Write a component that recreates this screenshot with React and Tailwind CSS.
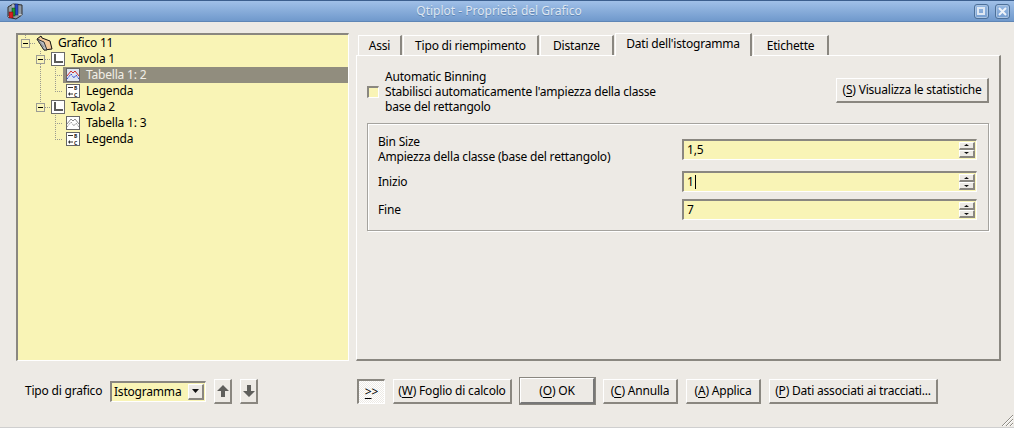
import React from 'react';

const FONT = "font-['Noto_Sans','Open_Sans',sans-serif]";
const RAISED = "border-t border-l border-t-white border-l-white border-b-2 border-r-2 border-b-[#8a8780] border-r-[#8a8780]";
const SUNKEN = "border-t-2 border-l-2 border-t-[#8a8780] border-l-[#8a8780] border-b border-r border-b-white border-r-white";

function AppIcon() {
  return (
    <svg width="18" height="18" viewBox="0 0 18 18">
      <path d="M2 5 L7 2 L16 3 L16 13 L10 17 L2 15 Z" fill="#8f9aa5" stroke="#2c2c2c" strokeWidth="1" />
      <path d="M7 2 L7 11 L2 15 M7 11 L16 13" stroke="#c9d0d6" strokeWidth="1" fill="none" />
      <rect x="9" y="2" width="3" height="11" fill="#2347c9" stroke="#10204f" strokeWidth="0.5" />
      <rect x="6" y="6" width="3" height="8" fill="#1f9a2e" stroke="#0d3d12" strokeWidth="0.5" />
      <rect x="3" y="10" width="4" height="6" fill="#d42020" stroke="#5a0d0d" strokeWidth="0.5" />
    </svg>
  );
}

function WindowButton({ children }) {
  return (
    <span className="flex h-[15px] w-[15px] items-center justify-center rounded-[3px] border border-[#4d7099] shadow-[inset_0_0_0_1px_#a9c3e2]">
      {children}
    </span>
  );
}

function Guide({ width, lines, box }) {
  return (
    <svg width={width} height="16" className="shrink-0" shapeRendering="crispEdges">
      {lines.map((d, i) => (
        <path key={i} d={d} stroke="#9a9a90" strokeWidth="1" strokeDasharray="1 1" fill="none" />
      ))}
      {box !== undefined && (
        <g>
          <rect x={box + 0.5} y="4.5" width="8" height="8" fill="#f9f4b6" stroke="#9c9c94" />
          <path d={`M${box + 2} 8.5 H${box + 7}`} stroke="#000" />
        </g>
      )}
    </svg>
  );
}

function FolderIcon() {
  return (
    <svg width="17" height="16" viewBox="0 0 17 16" className="shrink-0">
      <path d="M1 4 L5 1 L6 3 L14 6 L16 14 L8 15 Z" fill="#f4c99a" stroke="#111" strokeWidth="1" />
      <path d="M1 4 L8 7 L11 15 L8 15 Z" fill="#b9bcc0" stroke="#333" strokeWidth="1" />
      <path d="M3 6 L8 12" stroke="#8a8d91" strokeWidth="1" />
    </svg>
  );
}

function LayerIcon() {
  return (
    <svg width="14" height="14" viewBox="0 0 14 14" className="shrink-0" shapeRendering="crispEdges">
      <rect x="0.5" y="0.5" width="13" height="13" fill="#fff" stroke="#6a6a6a" />
      <path d="M4 2 V10 H12" stroke="#5a5a5a" strokeWidth="2" fill="none" />
    </svg>
  );
}

function CurveIcon({ active }) {
  return (
    <svg width="14" height="14" viewBox="0 0 14 14" className="shrink-0">
      <rect x="0.5" y="0.5" width="13" height="13" fill={active ? '#dfe6f2' : '#fff'} stroke="#666" />
      <path d="M1 8 L5 3 L7 5 L9 3 L13 8" stroke={active ? '#d03030' : '#8a8a8a'} strokeWidth="1" fill="none" />
      <path d="M1 11 L5 6 L8 10 L10 7 L13 11" stroke={active ? '#2a3fd0' : '#9a9a9a'} strokeWidth="1" strokeDasharray="2 1" fill="none" />
    </svg>
  );
}

function LegendIcon() {
  return (
    <svg width="14" height="14" viewBox="0 0 14 14" className="shrink-0">
      <rect x="0.5" y="0.5" width="13" height="13" fill="#fff" stroke="#666" />
      <path d="M2 3.5 H7 M2 10 H7 M3.5 8.5 V11.5" stroke="#333" fill="none" />
      <text x="8" y="6" fontSize="5" fontWeight="bold" fill="#222">B</text>
      <text x="8" y="13" fontSize="5" fontWeight="bold" fill="#222">C</text>
    </svg>
  );
}

function Row({ guide, icon, label, selected, iconGap = 'gap-[6px]', inset = '' }) {
  return (
    <div className="flex h-4 items-center">
      {guide}
      <div className={`flex h-4 flex-1 items-center ${iconGap} ${inset} ${selected ? 'bg-[#918d7e] text-[#f1efe6]' : ''}`}>
        {icon}
        <span className="leading-4">{label}</span>
      </div>
    </div>
  );
}

function Mn({ k, rest }) {
  return (
    <span>
      (<span className="underline underline-offset-2">{k}</span>) {rest}
    </span>
  );
}

function PushButton({ className = '', children }) {
  return (
    <button className={`flex h-[25px] items-center justify-center bg-[#edeae5] ${RAISED} ${className}`}>
      {children}
    </button>
  );
}

function Arrow({ down }) {
  return (
    <svg width="5" height="2" viewBox="0 0 5 2">
      <path d={down ? 'M0 0 H5 L2.5 2 Z' : 'M2.5 0 L5 2 H0 Z'} fill="#111" />
    </svg>
  );
}

function SpinBox({ value, caret }) {
  return (
    <div className={`flex h-[21px] w-[295px] items-center justify-between bg-[#f9f4b6] pl-[3px] pr-[1px] ${SUNKEN}`}>
      <span className="flex items-center">
        {value}
        {caret && <span className="ml-px h-[14px] w-px bg-black" />}
      </span>
      <div className="flex flex-col">
        {[false, true].map((down) => (
          <span key={String(down)} className={`flex h-[8px] w-[16px] items-center justify-center bg-[#edeae5] ${RAISED}`}>
            <Arrow down={down} />
          </span>
        ))}
      </div>
    </div>
  );
}

function Tab({ label, width, selected }) {
  if (selected) {
    return (
      <div className={`z-10 -mb-px flex h-[23px] items-center justify-center border-t border-l border-t-white border-l-white border-r-2 border-r-[#8a8780] bg-[#edeae5] pb-[2px] ${width}`}>
        {label}
      </div>
    );
  }
  return (
    <div className={`flex h-[20px] items-center justify-center border-t border-l border-t-white border-l-white border-r-2 border-r-[#8a8780] ${width}`}>
      {label}
    </div>
  );
}

export default function App() {
  return (
    <div className={`relative flex h-[428px] w-[1014px] flex-col overflow-hidden border-b border-b-[#cfcfcf] bg-[#edeae5] text-[12px] tracking-[-0.2px] text-black ${FONT}`}>
      {/* title bar */}
      <div className="flex h-[22px] shrink-0 items-center justify-between border-t border-b border-t-[#3c5f8e] border-b-[#5f86b6] bg-gradient-to-b from-[#a0c0e8] to-[#7099cc] pl-[6px] pr-[4px] tracking-normal">
        <AppIcon />
        <span className="text-[#dfe7f1] [text-shadow:0_1px_0_#5f86b6]">Qtiplot - Proprietà del Grafico</span>
        <div className="flex gap-[6px]">
          <WindowButton>
            <span className="h-[8px] w-[8px] border-2 border-[#dfe8f3]" />
          </WindowButton>
          <WindowButton>
            <svg width="9" height="9" viewBox="0 0 9 9"><path d="M1 1 L8 8 M8 1 L1 8" stroke="#eef3f9" strokeWidth="2" /></svg>
          </WindowButton>
        </div>
      </div>

      <div className="flex pl-[16px] pt-[11px]">
        {/* tree */}
        <div className={`h-[328px] w-[333px] shrink-0 bg-[#f9f4b6] ${SUNKEN}`}>
          <Row
            guide={<Guide width={18} box={3} lines={['M7.5 0 V4', 'M12 8.5 H18']} />}
            icon={<FolderIcon />}
            label="Grafico 11"
            iconGap="gap-[5px]"
          />
          <Row
            guide={<Guide width={33} box={18} lines={['M22.5 0 V4', 'M22.5 13 V16', 'M27 8.5 H33']} />}
            icon={<LayerIcon />}
            label="Tavola 1"
          />
          <Row
            guide={<Guide width={45} lines={['M22.5 0 V16', 'M37.5 0 V16', 'M37 8.5 H45']} />}
            icon={<CurveIcon active />}
            label="Tabella 1: 2"
            inset="pl-[3px]"
            selected
          />
          <Row
            guide={<Guide width={45} lines={['M22.5 0 V16', 'M37.5 0 V8', 'M37 8.5 H45']} />}
            icon={<LegendIcon />}
            label="Legenda"
            inset="pl-[3px]"
          />
          <Row
            guide={<Guide width={33} box={18} lines={['M22.5 0 V4', 'M27 8.5 H33']} />}
            icon={<LayerIcon />}
            label="Tavola 2"
          />
          <Row
            guide={<Guide width={45} lines={['M37.5 0 V16', 'M37 8.5 H45']} />}
            icon={<CurveIcon />}
            label="Tabella 1: 3"
            inset="pl-[3px]"
          />
          <Row
            guide={<Guide width={45} lines={['M37.5 0 V8', 'M37 8.5 H45']} />}
            icon={<LegendIcon />}
            label="Legenda"
            inset="pl-[3px]"
          />
        </div>

        {/* tabs */}
        <div className="ml-[7px] flex w-[645px] flex-col">
          <div className="flex h-[22px] items-end gap-px pl-[2px]">
            <Tab label="Assi" width="w-[44px]" />
            <Tab label="Tipo di riempimento" width="w-[136px]" />
            <Tab label="Distanze" width="w-[74px]" />
            <Tab label="Dati dell'istogramma" width="w-[137px]" selected />
            <Tab label="Etichette" width="w-[76px]" />
          </div>
          <div className="h-[306px] border-t border-l border-t-white border-l-white border-b-2 border-r-2 border-b-[#8a8780] border-r-[#8a8780] px-[10px] pt-[13px]">
            <div className="flex h-[45px] items-start justify-between">
              <div className="flex items-center gap-[6px]">
                <span className={`h-[12px] w-[12px] bg-[#f9f4b6] ${SUNKEN}`} />
                <div className="leading-[15px]">
                  Automatic Binning
                  <br />
                  Stabilisci automaticamente l'ampiezza della classe
                  <br />
                  base del rettangolo
                </div>
              </div>
              <PushButton className="mt-[9px] w-[153px]">
                <Mn k="S" rest="Visualizza le statistiche" />
              </PushButton>
            </div>

            <div className="mt-[9px] grid h-[108px] grid-cols-[304px_295px] items-center content-start gap-y-[7px] border border-[#a5a39e] pl-[10px] pt-[10px] shadow-[inset_1px_1px_0_#fff,1px_1px_0_#fff]">
              <div className="leading-[15px]">
                Bin Size
                <br />
                Ampiezza della classe (base del rettangolo)
              </div>
              <SpinBox value="1,5" />
              <div>Inizio</div>
              <SpinBox value="1" caret />
              <div>Fine</div>
              <SpinBox value="7" />
            </div>
          </div>
        </div>
      </div>

      {/* bottom row */}
      <div className="mt-[16px] flex h-[28px] items-center pl-[25px]">
        <span className="w-[85px]">Tipo di grafico</span>
        <div className={`flex h-[21px] w-[96px] items-center justify-between bg-[#f9f4b6] pl-[2px] pr-[1px] ${SUNKEN}`}>
          <span>Istogramma</span>
          <span className={`flex h-[16px] w-[16px] items-center justify-center bg-[#edeae5] ${RAISED}`}>
            <svg width="7" height="4" viewBox="0 0 7 4"><path d="M0 0 H7 L3.5 4 Z" fill="#111" /></svg>
          </span>
        </div>
        <PushButton className="ml-[8px] w-[18px]">
          <svg width="12" height="14" viewBox="0 0 12 14"><path d="M6 1 L12 7 H8 V13 H4 V7 H0 Z" fill="#5f5f5c" /></svg>
        </PushButton>
        <PushButton className="ml-[8px] w-[18px]">
          <svg width="12" height="14" viewBox="0 0 12 14"><path d="M6 13 L12 7 H8 V1 H4 V7 H0 Z" fill="#5f5f5c" /></svg>
        </PushButton>
        <button className={`ml-[99px] flex h-[25px] w-[28px] items-center justify-center bg-[repeating-conic-gradient(#ffffff_0_25%,#edeae5_0_50%)] bg-[length:2px_2px] ${SUNKEN}`}>
          <span><span className="underline underline-offset-2">&gt;</span>&gt;</span>
        </button>
        <PushButton className="ml-[8px] w-[119px]"><Mn k="W" rest="Foglio di calcolo" /></PushButton>
        <button className="ml-[7px] flex h-[28px] w-[77px] items-center justify-center border-t-2 border-l-2 border-t-white border-l-white border-b-[3px] border-r-[3px] border-b-[#777] border-r-[#777] bg-[#edeae5] outline outline-1 -outline-offset-1 outline-[#8a8780]">
          <Mn k="O" rest="OK" />
        </button>
        <PushButton className="ml-[7px] w-[75px]"><Mn k="C" rest="Annulla" /></PushButton>
        <PushButton className="ml-[8px] w-[75px]"><Mn k="A" rest="Applica" /></PushButton>
        <PushButton className="ml-[8px] w-[169px]"><Mn k="P" rest="Dati associati ai tracciati..." /></PushButton>
      </div>

      {/* size grip */}
      <svg width="13" height="13" viewBox="0 0 13 13" className="absolute bottom-0 right-0">
        <path d="M1 12 L12 1 M5 12 L12 5 M9 12 L12 9" stroke="#8f8c85" strokeWidth="1" />
        <path d="M2 12 L12 2 M6 12 L12 6 M10 12 L12 10" stroke="#ffffff" strokeWidth="1" />
      </svg>
    </div>
  );
}
